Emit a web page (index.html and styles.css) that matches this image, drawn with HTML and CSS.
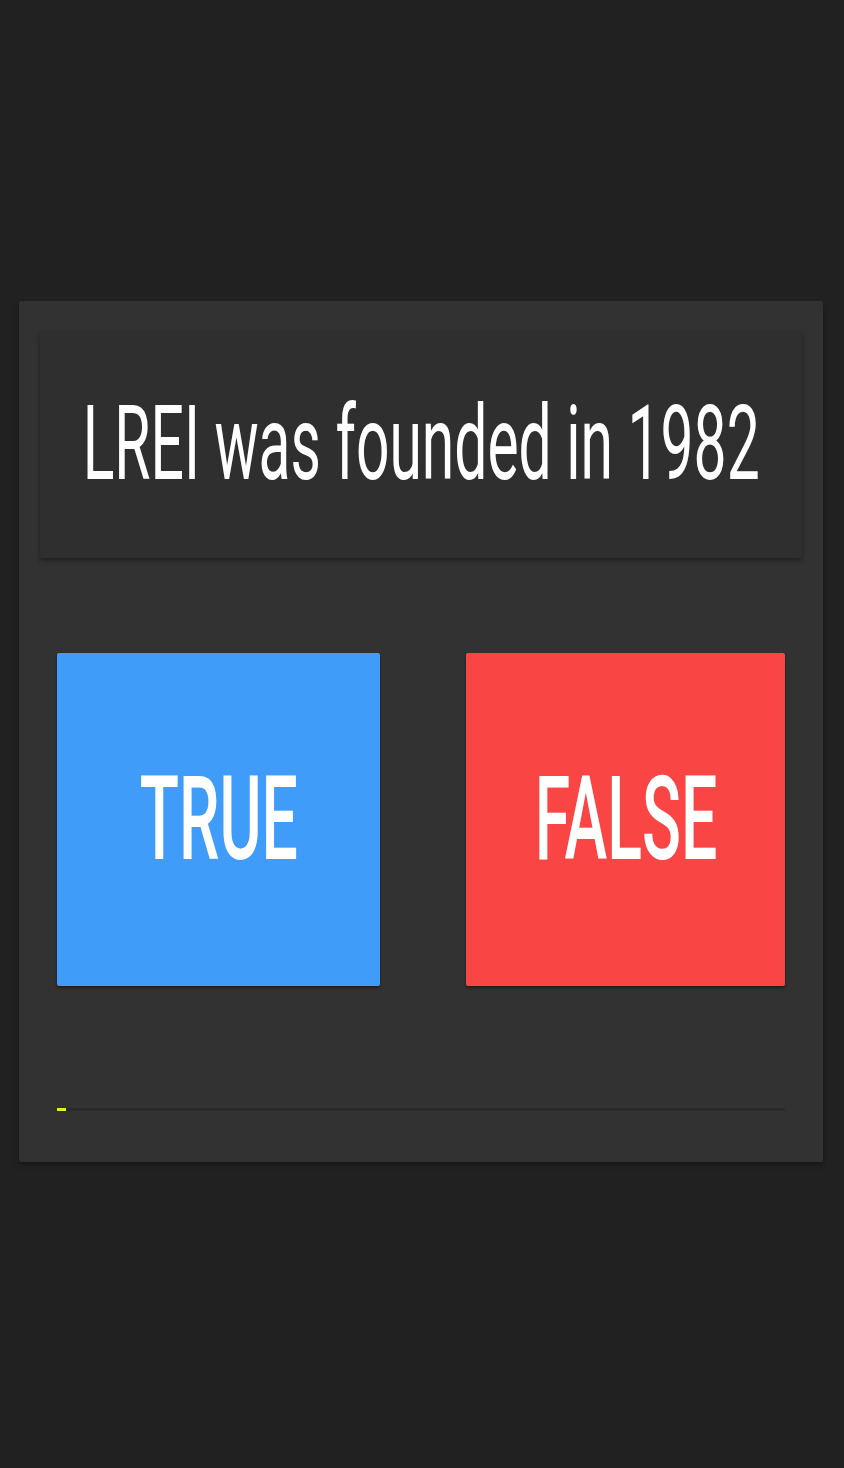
FILE: index.html
```html
<!DOCTYPE html>
<html>
<head>
<meta charset="utf-8">
<link rel="stylesheet" href="styles.css">
</head>
<body>
<div class="screen">
  <div class="card">
    <div class="question">
      <span class="question-text">LREI was founded in 1982</span>
    </div>
    <div class="answers">
      <button class="answer answer-true"><span class="answer-text">TRUE</span></button>
      <button class="answer answer-false"><span class="answer-text">FALSE</span></button>
    </div>
    <div class="progress">
      <div class="progress-fill"></div>
    </div>
  </div>
</div>
</body>
</html>
```
FILE: styles.css
```css
html, body {
  margin: 0;
  padding: 0;
  background: #212121;
}
.screen {
  width: 844px;
  height: 1468px;
  padding-top: 301px;
  box-sizing: border-box;
  font-family: Roboto, "Liberation Sans", sans-serif;
}
.card {
  margin-left: 19px;
  width: 804px;
  height: 861px;
  box-sizing: border-box;
  background: #323232;
  border-radius: 2px;
  box-shadow: 0 3px 4px rgba(0,0,0,0.35);
  padding: 30px 21px 0 21px;
}
.question {
  height: 227px;
  background: #2f2f2f;
  border-radius: 2px;
  box-shadow: 0 3px 5px rgba(0,0,0,0.35);
  display: flex;
  align-items: center;
  justify-content: center;
  overflow: hidden;
}
.question-text {
  display: inline-block;
  color: #ffffff;
  font-size: 104px;
  font-weight: 400;
  white-space: nowrap;
  transform: scaleX(0.565);
  margin-top: -3px;
}
.answers {
  display: flex;
  justify-content: space-between;
  margin: 95px 17px 0 17px;
}
.answer {
  height: 333px;
  border: none;
  border-radius: 2px;
  padding: 0;
  display: flex;
  align-items: center;
  justify-content: center;
  box-shadow: 0 2px 3px rgba(0,0,0,0.4);
  overflow: hidden;
}
.answer-true {
  width: 323px;
  background: #3f9cf8;
}
.answer-false {
  width: 319px;
  background: #fa4545;
}
.answer-text {
  display: inline-block;
  color: #ffffff;
  font-family: Roboto, "Liberation Sans", sans-serif;
  font-size: 117px;
  font-weight: 500;
  transform: scaleX(0.55);
  margin-top: -2px;
}
.progress {
  margin: 122px 17px 0 17px;
  height: 3px;
  background: #2a2a2a;
}
.progress-fill {
  width: 9px;
  height: 3px;
  background: #e4ef2c;
}
```
